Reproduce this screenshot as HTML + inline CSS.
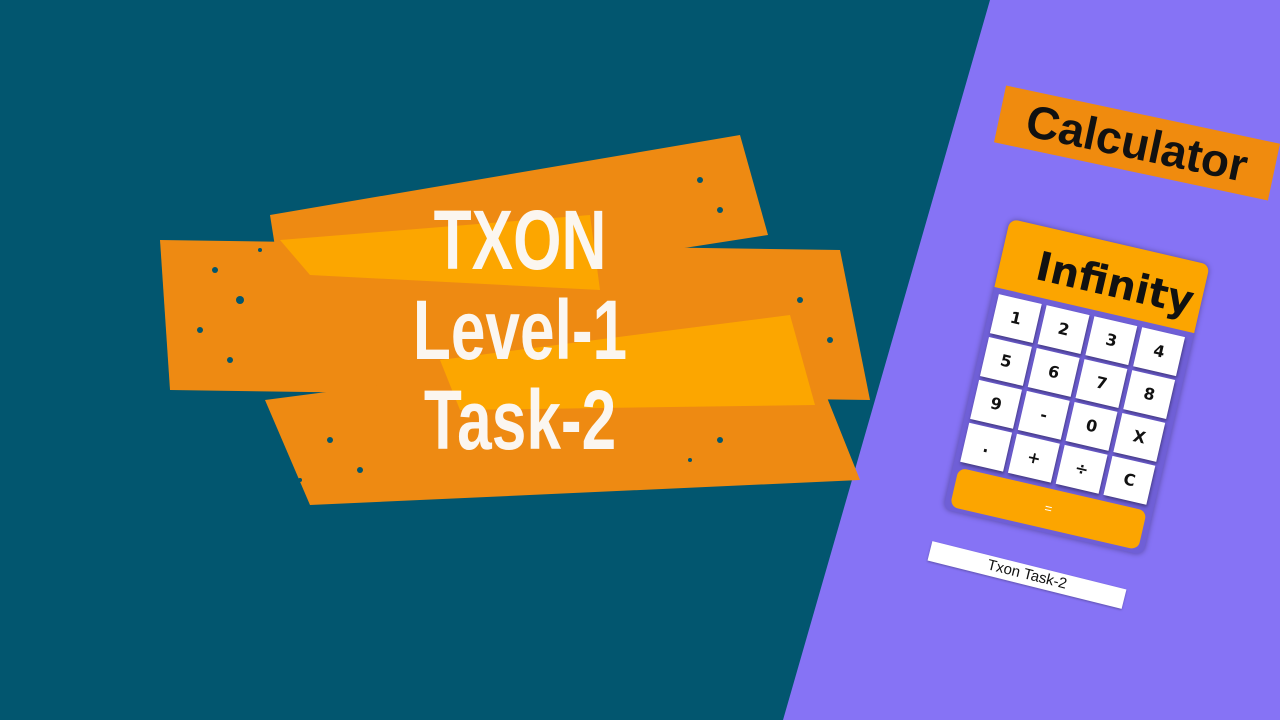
<!DOCTYPE html>
<html><head><meta charset="utf-8"><style>
html,body{margin:0;padding:0}
body{width:1280px;height:720px;position:relative;overflow:hidden;background:#02566f;font-family:"Liberation Sans",sans-serif}
svg.bg{position:absolute;left:0;top:0}
.t{position:absolute;left:0;width:1040px;text-align:center;color:#fbf6f0;font-weight:bold;font-size:84px;line-height:84px;transform:scaleX(.74);transform-origin:520px 0;font-family:"Liberation Sans","DejaVu Sans",sans-serif}
.lab{position:absolute;left:997px;top:114px;width:280px;height:58px;background:#f08b0e;transform:rotate(12deg);font-weight:bold;font-size:46px;line-height:58px;text-align:center;color:#111}
.calc{position:absolute;left:974px;top:238px;width:205px;height:298px;background:#6f5fd6;border-radius:8px;transform:rotate(13deg);box-shadow:0 0 6px rgba(0,0,0,.35)}
.hd{position:absolute;left:0;top:0;width:205px;height:70px;background:#fca500;border-radius:8px 8px 0 0;font-family:"Comic Sans MS","DejaVu Sans",sans-serif;font-weight:bold;font-size:40px;line-height:80px;text-align:right;padding-right:8px;box-sizing:border-box;color:#111}
.b{position:absolute;width:44px;height:40px;background:#fff;box-shadow:1px 2px 3px rgba(0,0,0,.4);font-family:"DejaVu Sans",sans-serif;font-weight:bold;font-size:16px;line-height:40px;text-align:center;color:#111}
.eq{position:absolute;left:6px;top:254px;width:193px;height:40px;background:#fca500;border-radius:8px;color:#fff;font-size:13px;line-height:40px;text-align:center}
.tt{position:absolute;left:927px;top:565px;width:200px;height:20px;background:#fff;transform:rotate(14deg);font-size:15px;line-height:20px;text-align:center;color:#111;box-shadow:0 1px 2px rgba(0,0,0,.3)}
</style></head><body>
<svg class="bg" width="1280" height="720">
<polygon points="990,0 1280,0 1280,720 783,720" fill="#8673f5"/>
<g fill="#ee8a12">
<polygon points="270,215 740,135 768,235 285,310"/>
<polygon points="160,240 840,250 870,400 170,390"/>
<polygon points="265,400 800,330 860,480 310,505"/>
</g>
<g fill="#fca600">
<polygon points="280,240 590,215 600,290 310,275"/>
<polygon points="440,360 790,315 815,405 460,410"/>
</g>
<g fill="#02566f">
<circle cx="215" cy="270" r="3"/><circle cx="240" cy="300" r="4"/><circle cx="200" cy="330" r="3"/><circle cx="230" cy="360" r="3"/><circle cx="330" cy="440" r="3"/><circle cx="360" cy="470" r="3"/><circle cx="700" cy="180" r="3"/><circle cx="720" cy="210" r="3"/><circle cx="800" cy="300" r="3"/><circle cx="830" cy="340" r="3"/><circle cx="300" cy="480" r="2"/><circle cx="260" cy="250" r="2"/><circle cx="690" cy="460" r="2"/><circle cx="720" cy="440" r="3"/>
</g>
</svg>
<div class="t" style="top:198px">TXON</div>
<div class="t" style="top:288px">Level-1</div>
<div class="t" style="top:378px">Task-2</div>
<div class="lab">Calculator</div>
<div class="calc">
<div class="hd">Infinity</div>
<div class="b" style="left:6px;top:76px">1</div><div class="b" style="left:55px;top:76px">2</div><div class="b" style="left:104px;top:76px">3</div><div class="b" style="left:153px;top:76px">4</div>
<div class="b" style="left:6px;top:120px">5</div><div class="b" style="left:55px;top:120px">6</div><div class="b" style="left:104px;top:120px">7</div><div class="b" style="left:153px;top:120px">8</div>
<div class="b" style="left:6px;top:164px">9</div><div class="b" style="left:55px;top:164px">-</div><div class="b" style="left:104px;top:164px">0</div><div class="b" style="left:153px;top:164px">X</div>
<div class="b" style="left:6px;top:208px">.</div><div class="b" style="left:55px;top:208px">+</div><div class="b" style="left:104px;top:208px">÷</div><div class="b" style="left:153px;top:208px">C</div>
<div class="eq">=</div>
</div>
<div class="tt">Txon Task-2</div>
</body></html>
